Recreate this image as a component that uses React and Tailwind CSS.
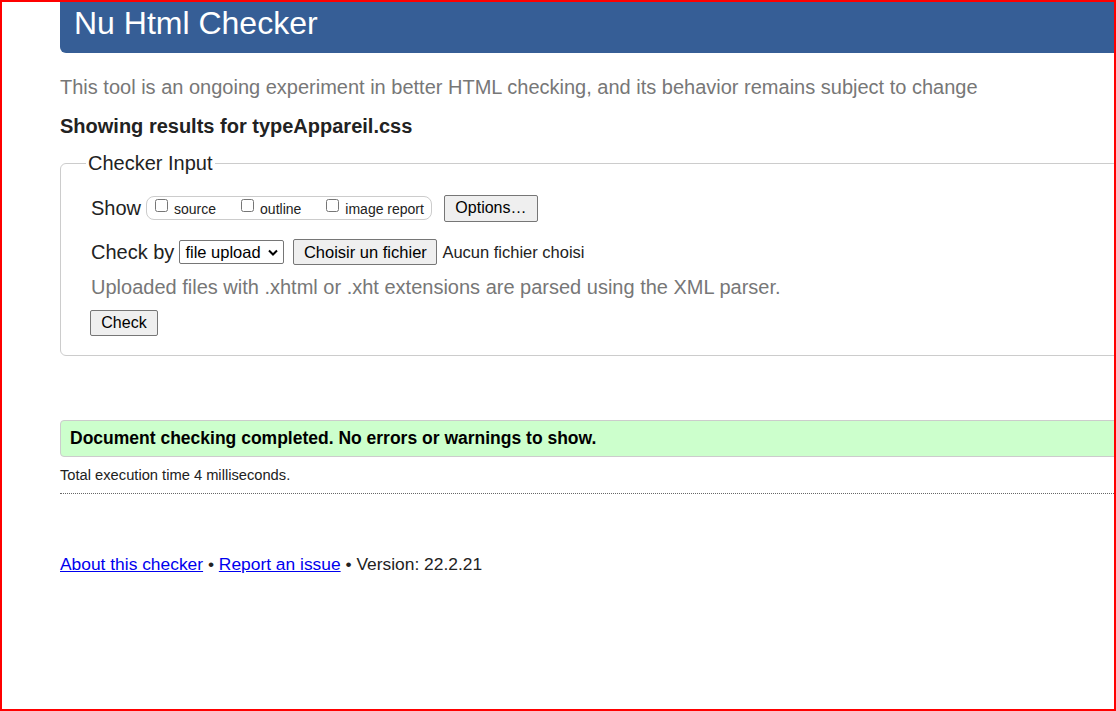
export default function App() {
    return (
        <div className="w-[1116px] h-[711px] border-2 border-[#ff0000] overflow-hidden bg-white text-[#222] font-['Liberation_Sans',Arial,sans-serif]">
            <div className="w-[1200px] pl-[58px]">
                <header className="h-[51px] bg-[#365e96] rounded-bl-[6px] flex items-center pl-[14px]">
                    <h1 className="text-white text-[32px] leading-none pb-[9px]">Nu Html Checker</h1>
                </header>

                <p className="mt-[21px] text-[20px] leading-[26px] text-[#777]">
                    This tool is an ongoing experiment in better HTML checking, and its behavior remains subject to change
                </p>

                <p className="mt-[14px] text-[20px] leading-[24px] font-bold">
                    Showing results for typeAppareil.css
                </p>

                <fieldset className="mt-[13px] border border-[#ccc] rounded-[6px] pl-[30px] pb-[19px] pt-[18px]">
                    <legend className="-ml-[5px] px-[2px] text-[20px] leading-[24px]">Checker Input</legend>

                    <div className="flex items-center h-[30px]">
                        <span className="text-[20px] mr-[5px]">Show</span>
                        <div className="flex items-center h-[24px] border border-[#ccc] rounded-[8px] pl-[8px] pr-[7px] text-[14px]">
                            <label className="flex items-center">
                                <input type="checkbox" className="w-[13px] h-[13px] -mt-[5px]" />
                                <span className="ml-[6px] mt-[2px]">source</span>
                            </label>
                            <label className="flex items-center ml-[25px]">
                                <input type="checkbox" className="w-[13px] h-[13px] -mt-[5px]" />
                                <span className="ml-[6px] mt-[2px]">outline</span>
                            </label>
                            <label className="flex items-center ml-[25px]">
                                <input type="checkbox" className="w-[13px] h-[13px] -mt-[5px]" />
                                <span className="ml-[6px] mt-[2px]">image report</span>
                            </label>
                        </div>
                        <button className="ml-[12px] h-[27px] w-[94px] bg-[#efefef] border border-[#767676] rounded-[2px] text-[16px] text-black">
                            Options…
                        </button>
                    </div>

                    <div className="flex items-center h-[26px] mt-[16px]">
                        <span className="text-[20px] mr-[5px]">Check by</span>
                        <div className="flex items-center justify-between h-[24px] w-[105px] border border-[#767676] rounded-[2px] pl-[5px] pr-[5px] text-[16.5px] text-black">
                            <span>file upload</span>
                            <svg width="10" height="7" viewBox="0 0 10 7" fill="none" stroke="#000" strokeWidth="2">
                                <path d="M1 1.5 L5 5.5 L9 1.5" />
                            </svg>
                        </div>
                        <button className="ml-[9px] h-[26px] w-[144px] bg-[#efefef] border border-[#767676] rounded-[2px] text-[16.5px] text-black">
                            Choisir un fichier
                        </button>
                        <span className="ml-[5px] text-[16.5px]">Aucun fichier choisi</span>
                    </div>

                    <p className="mt-[9px] text-[20px] leading-[26px] text-[#777]">
                        Uploaded files with .xhtml or .xht extensions are parsed using the XML parser.
                    </p>

                    <button className="mt-[10px] -ml-[1px] h-[26px] w-[68px] bg-[#efefef] border border-[#767676] rounded-[2px] text-[16px] text-black">
                        Check
                    </button>
                </fieldset>

                <div className="mt-[64px] h-[37px] flex items-center bg-[#ccffcc] border border-[#ccc] rounded-l-[4px] pl-[9px]">
                    <p className="text-[17.5px] font-bold text-black">Document checking completed. No errors or warnings to show.</p>
                </div>

                <p className="mt-[9px] text-[14.7px] leading-[18px] text-[#222] pb-[9px] border-b border-dotted border-[#666]">
                    Total execution time 4 milliseconds.
                </p>

                <p className="mt-[59px] text-[17.4px] leading-[22px]">
                    <a href="#" className="text-[#0000ee] underline">About this checker</a>
                    {' • '}
                    <a href="#" className="text-[#0000ee] underline">Report an issue</a>
                    {' • Version: 22.2.21'}
                </p>
            </div>
        </div>
    )
}
